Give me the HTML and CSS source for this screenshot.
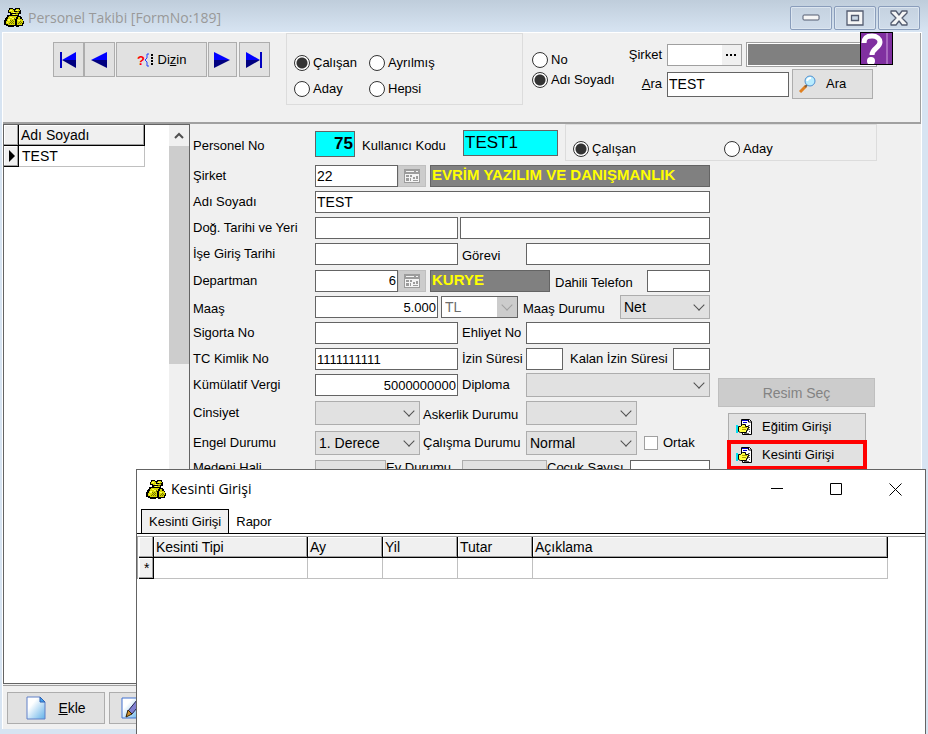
FILE: index.html
```
<!DOCTYPE html>
<html lang="tr">
<head>
	<meta charset="UTF-8">
	<title>Personel Takibi</title>
	<link rel="stylesheet" href="styles.css">
</head>
<body>
	<!-- shared icons -->
	<svg class="defs" width="0" height="0">
		<symbol id="sack" viewBox="0 0 20 19">
			<path d="M5 0h4v1h2V0h5v2h1v4h-2v2h2v1h1v2h1v2h1v3h-1v2h-4v1h-3v-1h-2v1H4v-1H2v-1H0v-5h1v-2h1V9h1V7h3V5H4V2h1z" fill="#000"/>
			<path d="M6 1h3v1H6z M12 1h3v1h-3z M5 2h5v2H5z M11 2h5v1h-5z M7 4h8v1H7z M8 6h6v1H8z M5 8h8v1H5z M4 9h8v2H4z M3 11h8v2H3z M2 13h9v3H2z M4 16h7v1H4z M14 9h2v2h-2z M13 11h5v1h-5z M13 12h6v3h-6z M13 15h5v2h-5z" fill="#d8d800"/>
			<path d="M6 2h2v1H6z M12 2h2v1h-2z M9 4h2v1H9z M6 9h2v1H6z M4 11h2v2H4z M8 10h2v1H8z M14 12h2v1h-2z M3 14h1v1H3z M9 6h2v1H9z" fill="#ffff50"/>
			<path d="M8 12h1v1H8z M6 12h1v1H6z M7 13h1v1H7z M9 13h1v1H9z M8 14h1v1H8z M6 14h1v1H6z M7 15h1v1H7z M9 15h1v1H9z M5 15h1v1H5z M10 10h1v2h-1z M16 13h1v1h-1z M17 14h1v1h-1z M15 14h1v1h-1z M16 15h1v1h-1z M14 15h1v1h-1z M12 5h2v1h-2z M13 3h2v1h-2z" fill="#707000"/>
		</symbol>
		<symbol id="lookup" viewBox="0 0 16 14">
			<path d="M0 0h16v14H0z" fill="#9c9c9c"/>
			<path d="M2 2h8v1H2z M12 2h2v1h-2z M1 5h14v8H1z" fill="#f4f4f4"/>
			<path d="M2 6h3v2H2z M6 6h2v2H6z M9 8h2v2H9z M12 7h2v3h-2z M2 9h3v3H2z M6 9h1v3H6z M9 11h5v1H9z" fill="#9c9c9c"/>
		</symbol>
		<symbol id="handDoc" viewBox="0 0 17 17">
			<path d="M5.5.5h8l2 2v13h-9v-3h-1z" fill="#fff" stroke="#000"/>
			<path d="M12.5 0v3h3" fill="none" stroke="#000"/>
			<path d="M6 1h6v1H6z M7 3h4v1H7z" fill="#0000d0"/>
			<path d="M12 6h2v1h-2z M13 8h1v1h-1z M12 10h2v1h-2z M13 12h1v1h-1z M8 14h5v1H8z" fill="#606060"/>
			<path d="M0 6h2v8H0z" fill="#00e0f0"/>
			<path d="M2.5 7.5h2l2-2h3v2h3v2h-1v2h-1v2h-6l-2-1z" fill="#ffff40" stroke="#000"/>
			<path d="M6 8.500h5M6 10.500h4" stroke="#b0a000"/>
		</symbol>
	</svg>

	<div class="window">
		<div class="titleBar">
			<svg class="appIcon"><use href="#sack"/></svg>
			<h1>Personel Takibi [FormNo:189]</h1>
			<div class="windowButtons">
				<button type="button" aria-label="Simge durumuna küçült">
					<svg width="18" height="8" viewBox="0 0 18 8"><rect x="1" y="1" width="16" height="5" rx="1" fill="#f6f6f6" stroke="#545c70"/></svg>
				</button>
				<button type="button" aria-label="Ekranı kapla">
					<svg width="18" height="16" viewBox="0 0 18 16"><path d="M1 1h16v14H1z M5.500 5.500v5h7v-5z" fill="#f6f6f6" fill-rule="evenodd" stroke="#545c70" stroke-width="1.300"/></svg>
				</button>
				<button type="button" aria-label="Kapat">
					<svg width="18" height="16" viewBox="0 0 18 16"><path d="M1 1h5l3 4 3-4h5v2l-5 5 5 5v2h-5l-3-4-3 4H1v-2l5-5-5-5z" fill="#f6f6f6" stroke="#545c70" stroke-width="1.300" stroke-linejoin="round"/></svg>
				</button>
			</div>
		</div>

		<div class="client">
			<div class="header">
				<div class="navigator">
					<button type="button" class="navFirst" aria-label="İlk">
						<svg width="17" height="16"><path d="M16 0v8H2z" fill="#00f"/><path d="M16 16V8H2z" fill="#000080"/><path d="M0 0h2v16H0z" fill="#0000c0"/></svg>
					</button>
					<button type="button" class="navPrior" aria-label="Önceki">
						<svg width="17" height="16"><path d="M16 0v8H0z" fill="#00f"/><path d="M16 16V8H0z" fill="#000080"/></svg>
					</button>
					<button type="button" class="navIndex">
						<svg width="17" height="14"><text x="0" y="12" class="questionMark">?</text><path d="M12 1h-2v4L8 7l2 2v4h2" fill="none" stroke="#2040ff"/><path d="M14 1h2v2h-2z M14 4h2v2h-2z M14 7h2v2h-2z M14 10h2v2h-2z" fill="#000"/></svg>
						<span>Di<u>z</u>in</span>
					</button>
					<button type="button" class="navNext" aria-label="Sonraki">
						<svg width="17" height="16"><path d="M0 0v8h16z" fill="#00f"/><path d="M0 16V8h16z" fill="#000080"/></svg>
					</button>
					<button type="button" class="navLast" aria-label="Son">
						<svg width="17" height="16"><path d="M0 0v8h14z" fill="#00f"/><path d="M0 16V8h14z" fill="#000080"/><path d="M14 0h2v16h-2z" fill="#0000c0"/></svg>
					</button>
				</div>

				<div class="group statusFilter">
					<label><input type="radio" name="filter" checked>Çalışan</label>
					<label><input type="radio" name="filter">Ayrılmış</label>
					<label><input type="radio" name="filter">Aday</label>
					<label><input type="radio" name="filter">Hepsi</label>
				</div>

				<div class="searchBy">
					<label><input type="radio" name="searchBy">No</label>
					<label><input type="radio" name="searchBy" checked>Adı Soyadı</label>
				</div>

				<div class="search">
					<div class="searchRow">
						<label for="txtCompanyFilter">Şirket</label>
						<div class="picker">
							<input type="text" id="txtCompanyFilter">
							<button type="button" aria-label="Şirket seç">
								<svg width="11" height="2"><path d="M0 0h2v2H0z M4 0h2v2H4z M8 0h2v2H8z"/></svg>
							</button>
						</div>
						<div class="companyName">
							<button type="button" class="help" aria-label="Yardım">
								<svg width="31" height="31" viewBox="0 0 31 31"><path d="M25 0h2v31h-2z" fill="#a868c0"/><path d="M3 10C3 3 8 3 11 3c5 0 8 3 8 6 0 6-8 6-8 13" fill="none" stroke="#fff" stroke-width="5"/><circle cx="10" cy="28" r="4" fill="#fff"/></svg>
							</button>
						</div>
					</div>
					<div class="searchRow">
						<label for="txtSearch"><u>A</u>ra</label>
						<input type="text" id="txtSearch" class="field" value="TEST">
						<button type="button" class="btnSearch">
							<svg width="18" height="18"><path d="M1 17l6-6" stroke="#e08020" stroke-width="3"/><path d="M6 12l2-2" stroke="#806040" stroke-width="2"/><circle cx="11" cy="6" r="5" fill="#b8ecff" stroke="#5090d0"/><path d="M8 6q1-3 4-3" fill="none" stroke="#fff" stroke-width="2"/></svg>
							<span>Ara</span>
						</button>
					</div>
				</div>
			</div>

			<div class="content">
				<div class="personList">
					<table class="grid">
						<thead>
							<tr><th class="marker"></th><th class="colName">Adı Soyadı</th></tr>
						</thead>
						<tbody>
							<tr><th class="marker"><svg width="6" height="12"><path d="M0 0l6 6-6 6z"/></svg></th><td>TEST</td></tr>
						</tbody>
					</table>
					<div class="scrollBar">
						<button type="button" aria-label="Yukarı"><svg width="10" height="7"><path d="M1 6l4-4 4 4" fill="none" stroke="#505050" stroke-width="2"/></svg></button>
						<div class="thumb"></div>
					</div>
				</div>

				<div class="form">
					<div class="row firstRow">
						<label class="caption" for="txtNo">Personel No</label>
						<input type="text" id="txtNo" class="field key keyNo" value="75">
						<label class="userCaption" for="txtUser">Kullanıcı Kodu</label>
						<input type="text" id="txtUser" class="field key keyUser" value="TEST1">
						<div class="group statusGroup">
							<label><input type="radio" name="status" checked>Çalışan</label>
							<label><input type="radio" name="status">Aday</label>
						</div>
					</div>
					<div class="formBody">
						<div class="fields">
							<div class="row lookupRow">
								<label class="caption" for="txtCompany">Şirket</label>
								<input type="text" id="txtCompany" class="field code" value="22">
								<button type="button" class="lookup" aria-label="Şirket listesi" disabled><svg><use href="#lookup"/></svg></button>
								<output class="display grow">EVRİM YAZILIM VE DANIŞMANLIK</output>
							</div>
							<div class="row">
								<label class="caption" for="txtName">Adı Soyadı</label>
								<input type="text" id="txtName" class="field grow" value="TEST">
							</div>
							<div class="row">
								<label class="caption" for="txtBirth">Doğ. Tarihi ve Yeri</label>
								<input type="text" id="txtBirth" class="field medium">
								<input type="text" class="field grow birthPlace" aria-label="Doğum yeri">
							</div>
							<div class="row">
								<label class="caption" for="txtStart">İşe Giriş Tarihi</label>
								<input type="text" id="txtStart" class="field medium">
								<label class="second low" for="txtJob">Görevi</label>
								<input type="text" id="txtJob" class="field grow">
							</div>
							<div class="row lookupRow">
								<label class="caption" for="txtDepartment">Departman</label>
								<input type="text" id="txtDepartment" class="field code number" value="6">
								<button type="button" class="lookup" aria-label="Departman listesi" disabled><svg><use href="#lookup"/></svg></button>
								<output class="display department">KURYE</output>
								<label class="phoneCaption low" for="txtPhone">Dahili Telefon</label>
								<input type="text" id="txtPhone" class="field grow">
							</div>
							<div class="row">
								<label class="caption low" for="txtSalary">Maaş</label>
								<input type="text" id="txtSalary" class="field salary number" value="5.000">
								<div class="combo currency">
									<select aria-label="Para birimi" disabled><option>TL</option></select>
								</div>
								<label class="salaryCaption low" for="selSalaryType">Maaş Durumu</label>
								<div class="combo grow"><select id="selSalaryType"><option>Net</option><option>Brüt</option></select></div>
							</div>
							<div class="row">
								<label class="caption" for="txtInsurance">Sigorta No</label>
								<input type="text" id="txtInsurance" class="field medium">
								<label class="second" for="txtLicence">Ehliyet No</label>
								<input type="text" id="txtLicence" class="field grow">
							</div>
							<div class="row">
								<label class="caption" for="txtIdentity">TC Kimlik No</label>
								<input type="text" id="txtIdentity" class="field medium digits" value="1111111111">
								<label class="second" for="txtLeave">İzin Süresi</label>
								<input type="text" id="txtLeave" class="field leave">
								<label class="leaveCaption" for="txtLeaveLeft">Kalan İzin Süresi</label>
								<input type="text" id="txtLeaveLeft" class="field grow">
							</div>
							<div class="row">
								<label class="caption" for="txtTax">Kümülatif Vergi</label>
								<input type="text" id="txtTax" class="field medium number" value="5000000000">
								<label class="second" for="selDiploma">Diploma</label>
								<div class="combo grow"><select id="selDiploma"><option></option></select></div>
							</div>
							<div class="row comboRow">
								<label class="caption" for="selGender">Cinsiyet</label>
								<div class="combo left"><select id="selGender"><option></option></select></div>
								<label class="wide low" for="selMilitary">Askerlik Durumu</label>
								<div class="combo right"><select id="selMilitary"><option></option></select></div>
							</div>
							<div class="row comboRow">
								<label class="caption" for="selDisability">Engel Durumu</label>
								<div class="combo left"><select id="selDisability"><option>1. Derece</option></select></div>
								<label class="wide" for="selWork">Çalışma Durumu</label>
								<div class="combo right"><select id="selWork"><option>Normal</option></select></div>
								<label class="partner"><input type="checkbox">Ortak</label>
							</div>
							<div class="row comboRow lastRow">
								<label class="caption" for="selMarital">Medeni Hali</label>
								<div class="combo marital"><select id="selMarital"><option></option></select></div>
								<label class="house" for="selHouse">Ev Durumu</label>
								<div class="combo houseCombo"><select id="selHouse"><option></option></select></div>
								<label class="children" for="txtChildren">Çocuk Sayısı</label>
								<input type="text" id="txtChildren" class="field grow">
							</div>
						</div>
						<div class="side">
							<button type="button" class="btnPicture" disabled>Resim Seç</button>
							<button type="button" class="btnEntry"><svg><use href="#handDoc"/></svg>Eğitim Girişi</button>
							<button type="button" class="btnEntry marked"><svg><use href="#handDoc"/></svg>Kesinti Girişi</button>
						</div>
					</div>
				</div>
			</div>

			<div class="footer">
				<button type="button" class="btnAdd">
					<svg width="20" height="24"><defs><linearGradient id="paper" x1="0" y1="0" x2="1" y2="1"><stop offset="0.300" stop-color="#fff"/><stop offset="1" stop-color="#60b0e8"/></linearGradient></defs><path d="M1 1h13l5 5v17H1z" fill="url(#paper)" stroke="#6080c8"/><path d="M14 1v5h5z" fill="#40a0f0" stroke="#3060b0"/></svg>
					<span><u>E</u>kle</span>
				</button>
				<button type="button" class="btnEdit" aria-label="Düzelt">
					<svg width="24" height="24"><path d="M1 2h18v20H1z" fill="url(#paper)" stroke="#4070d0"/><path d="M7 15L16 4l4 3-9 11z" fill="#8080d0" stroke="#202050"/><path d="M7 14l4 4-6 3z" fill="#d09030" stroke="#302000"/></svg>
				</button>
			</div>
		</div>
	</div>

	<div class="dialog">
		<div class="dialogTitle">
			<svg class="appIcon"><use href="#sack"/></svg>
			<h2>Kesinti Girişi</h2>
			<div class="dialogButtons">
				<button type="button" aria-label="Simge durumuna küçült"><svg width="13" height="13"><path d="M0 5.500h12" stroke="#000"/></svg></button>
				<button type="button" aria-label="Ekranı kapla"><svg width="13" height="13"><path d="M.5.5h11v11H.5z" fill="none" stroke="#000"/></svg></button>
				<button type="button" aria-label="Kapat"><svg width="13" height="13"><path d="M.5.5l12 12M12.500.5l-12 12" stroke="#000"/></svg></button>
			</div>
		</div>
		<div class="tabs">
			<button type="button" class="tab active">Kesinti Girişi</button>
			<button type="button" class="tab">Rapor</button>
		</div>
		<div class="tabPage">
			<table class="grid">
				<thead>
					<tr><th class="marker"></th><th class="colType">Kesinti Tipi</th><th class="colSmall">Ay</th><th class="colSmall">Yil</th><th class="colSmall">Tutar</th><th class="colNote">Açıklama</th></tr>
				</thead>
				<tbody>
					<tr><th class="marker">*</th><td></td><td></td><td></td><td></td><td></td></tr>
				</tbody>
			</table>
		</div>
	</div>
</body>
</html>
```
FILE: styles.css
```
* {
	box-sizing: border-box;
}
body {
	margin: 0px;
	height: 100vh;
	overflow: hidden;
	position: relative;
	background-color: #d7e4f2;
	color: #000;
	font-family: "Liberation Sans", Arial, sans-serif;
	font-size: 13px;
	line-height: 16px;
}
button, input, select {
	font: inherit;
	color: inherit;
	margin: 0px;
	border-radius: 0px;
}
button {
	display: flex;
	align-items: center;
	justify-content: center;
	padding: 0px;
	background-color: #e1e1e1;
	border: 1px solid #adadad;
}
label {
	white-space: nowrap;
}
h1, h2 {
	margin: 0px;
	font-family: "Open Sans", "Noto Sans", sans-serif;
	font-size: 14px;
	font-weight: normal;
	line-height: 20px;
}
.defs {
	position: absolute;
}
.appIcon {
	width: 20px;
	height: 19px;
}

/* main window */
.window {
	height: 100%;
	display: flex;
	flex-direction: column;
	padding: 0px 6px 5px 2px;
}
.titleBar {
	display: flex;
	align-items: center;
	height: 32px;
	margin: 0px -6px 0px -2px;
	padding: 3px 8px 0px 4px;
	gap: 4px;
	background: linear-gradient(#bfcddb, #d7e4f2);
}
.titleBar h1 {
	flex: 1;
	color: #999;
}
.windowButtons {
	display: flex;
	gap: 2px;
}
.windowButtons button {
	width: 42px;
	height: 24px;
	background: linear-gradient(#c5d2e0, #d0dcea);
	border: 1px solid #8a9dbb;
	border-radius: 2px;
	box-shadow: inset 0 0 0 1px #dce6f0;
}
.client {
	flex: 1;
	min-height: 0;
	display: flex;
	flex-direction: column;
	background-color: #f0f0f0;
	border-top: 1px solid #fff;
	border-left: 1px solid #fff;
	border-right: 1px solid #fff;
}

/* top panel */
.header {
	display: flex;
	align-items: flex-start;
	height: 91px;
	padding-left: 50px;
	border-bottom: 2px solid #a0a0a0;
	border-right: 1px solid #a0a0a0;
}
.navigator {
	display: flex;
	margin-top: 9px;
}
.navigator button {
	width: 31px;
	height: 35px;
}
.navigator .navIndex {
	width: 91px;
	gap: 4px;
	margin: 0px 1px;
}
.navigator .navNext {
	width: 29px;
	margin-right: 2px;
}
.questionMark {
	fill: #f00;
	font-size: 13px;
	font-weight: bold;
}
.group {
	border: 1px solid #dcdcdc;
}
.statusFilter {
	display: grid;
	grid-template-columns: 75px auto;
	align-content: start;
	gap: 10px 0px;
	width: 237px;
	height: 72px;
	margin-left: 16px;
	padding: 21px 0px 0px 7px;
}
.group label, .searchBy label {
	display: flex;
	align-items: center;
	gap: 3px;
}
input[type="radio"] {
	appearance: none;
	width: 16px;
	height: 16px;
	border: 1px solid #333;
	border-radius: 50%;
	background-color: #fff;
}
input[type="radio"]:checked {
	background: radial-gradient(circle, #333 5px, #fff 6px);
}
.searchBy {
	display: flex;
	flex-direction: column;
	gap: 4px;
	width: 89px;
	margin: 19px 0px 0px 9px;
}
.search {
	display: flex;
	flex-direction: column;
	gap: 2px;
	margin-top: 9px;
}
.searchRow {
	display: flex;
	align-items: center;
}
.searchRow label {
	width: 41px;
	margin-right: 5px;
	text-align: right;
}
.picker {
	display: flex;
	width: 75px;
	height: 22px;
	background-color: #fff;
	border: 1px solid #a0a0a0;
}
.picker input {
	flex: 1;
	min-width: 0;
	border: none;
}
.picker button {
	width: 19px;
	background-color: #f0f0f0;
	border: none;
}
.companyName {
	position: relative;
	width: 131px;
	height: 25px;
	margin-left: 4px;
	background-color: #808080;
	border: 1px solid #a0a0a0;
	outline: 1px solid #fff;
	outline-offset: -2px;
}
.help {
	position: absolute;
	top: -11px;
	right: -17px;
	width: 33px;
	height: 33px;
	background-color: #8030a0;
	border: 1px solid #000;
}
#txtSearch {
	width: 122px;
	height: 25px;
}
.btnSearch {
	width: 81px;
	height: 30px;
	margin-left: 3px;
	gap: 9px;
	justify-content: flex-start;
	padding-left: 6px;
}

/* person list */
.content {
	flex: 1;
	min-height: 0;
	display: flex;
	overflow: hidden;
}
.personList {
	display: flex;
	justify-content: space-between;
	align-items: flex-start;
	width: 187px;
	background-color: #fff;
	border: 1px solid #646464;
}
.grid {
	border-collapse: separate;
	border-spacing: 0px;
	table-layout: fixed;
	font-size: 14px;
}
.grid th {
	height: 21px;
	padding: 0px 0px 0px 2px;
	font-weight: normal;
	text-align: left;
	background-color: #f0f0f0;
	border-right: 1px solid #000;
	border-bottom: 1px solid #000;
	box-shadow: inset -1px -1px #a0a0a0, inset 1px 1px #fff;
}
.grid td {
	height: 21px;
	padding: 0px 3px;
	border-right: 1px solid #c0c0c0;
	border-bottom: 1px solid #c0c0c0;
}
.grid .marker {
	width: 15px;
	padding-left: 5px;
}
.grid .marker svg {
	display: block;
}
.colName {
	width: 126px;
}
.scrollBar {
	width: 20px;
	height: 100%;
	background-color: #f0f0f0;
}
.scrollBar button {
	width: 20px;
	height: 21px;
	background-color: #f0f0f0;
	border: none;
}
.thumb {
	height: 39%;
	background-color: #cdcdcd;
}

/* form */
.form {
	flex: 1;
	min-width: 0;
	padding-left: 3px;
}
.row {
	display: flex;
	align-items: center;
	height: 22px;
}
.lookupRow {
	height: 23px;
}
.comboRow {
	height: 26px;
}
.lastRow {
	align-items: flex-start;
}
.firstRow {
	height: 40px;
	align-items: flex-start;
}
.firstRow label.caption, .userCaption {
	margin-top: 14px;
}
.formBody {
	display: flex;
}
.fields {
	flex: 1;
	min-width: 0;
	display: flex;
	flex-direction: column;
	gap: 4px;
}
.caption {
	width: 122px;
}
.field {
	height: 22px;
	padding: 0px 1px;
	background-color: #fff;
	border: 1px solid #646464;
	font-size: 14px;
}
.grow {
	flex: 1;
	min-width: 0;
}
.number, .digits {
	font-size: 13px;
}
.number {
	text-align: right;
}
.code {
	width: 83px;
}
.medium {
	width: 143px;
}
.salary {
	width: 123px;
}
.leave {
	width: 37px;
}
.key {
	background-color: #0ff;
	font-size: 17px;
}
.keyNo {
	width: 40px;
	height: 26px;
	margin-top: 7px;
	font-weight: bold;
	text-align: right;
}
.keyUser {
	width: 95px;
	height: 26px;
	margin-top: 6px;
}
.userCaption {
	width: 101px;
	margin-left: 7px;
}
.statusGroup {
	display: flex;
	align-items: flex-end;
	width: 312px;
	height: 37px;
	margin-left: 7px;
	padding: 0px 0px 3px 7px;
}
.statusGroup label {
	width: 151px;
}
.birthPlace {
	margin-left: 2px;
}
.low {
	padding-top: 4px;
}
.second {
	width: 64px;
	margin-left: 4px;
}
.lookup {
	width: 28px;
	height: 22px;
	background-color: #ccc;
	border: 1px solid #bfbfbf;
}
.lookup svg {
	width: 16px;
	height: 14px;
}
.display {
	height: 22px;
	margin-left: 4px;
	padding: 1px;
	background-color: #808080;
	border: 1px solid #646464;
	color: #ff0;
	font-size: 15px;
	font-weight: bold;
	overflow: hidden;
	white-space: nowrap;
}
.department {
	width: 120px;
}
.phoneCaption {
	width: 92px;
	margin-left: 5px;
}
.salaryCaption {
	width: 97px;
	margin-left: 5px;
}
.leaveCaption {
	width: 103px;
	margin-left: 7px;
}
.wide {
	width: 103px;
	margin-left: 3px;
}
.partner {
	display: flex;
	align-items: center;
	gap: 5px;
	margin-left: 7px;
}
.partner input {
	appearance: none;
	width: 14px;
	height: 14px;
	background-color: #fff;
	border: 1px solid #a0a0a0;
}
.house {
	width: 76px;
}
.children {
	width: 83px;
}

/* drop-downs, arrow shares the cell with the select */
.combo {
	display: grid;
	align-items: center;
	height: 24px;
}
.combo select {
	grid-area: 1 / 1;
	width: 100%;
	height: 24px;
	padding: 0px 3px;
	appearance: none;
	background-color: #e1e1e1;
	border: 1px solid #adadad;
	font-size: 14px;
}
.combo::after {
	content: "";
	grid-area: 1 / 1;
	justify-self: end;
	width: 7px;
	height: 7px;
	margin: 0px 7px 4px 0px;
	border-right: 1px solid #505050;
	border-bottom: 1px solid #505050;
	transform: rotate(45deg);
	pointer-events: none;
}
.currency {
	width: 77px;
	height: 22px;
	margin-left: 3px;
}
.currency select {
	height: 22px;
	opacity: 1;
	color: #6d6d6d;
	background: linear-gradient(to left, #ccc 20px, #fff 20px);
	border-color: #646464;
}
.currency::after {
	border-color: #a0a0a0;
}
.left {
	width: 105px;
}
.right {
	width: 111px;
}
.marital {
	width: 71px;
}
.houseCombo {
	width: 85px;
}

/* buttons beside the form */
.side {
	width: 211px;
	padding: 214px 0px 0px 8px;
}
.btnPicture {
	width: 157px;
	height: 29px;
	background-color: #ccc;
	border-color: #bfbfbf;
	color: #838383;
	font-size: 14px;
}
.btnEntry {
	justify-content: flex-start;
	width: 138px;
	height: 28px;
	margin: 6px 0px 0px 10px;
	padding-left: 7px;
	gap: 9px;
}
.btnEntry svg {
	width: 17px;
	height: 17px;
}
.btnEntry.marked {
	margin-top: 0px;
	outline: 4px solid #f00;
	outline-offset: -3px;
}

/* bottom panel */
.footer {
	display: flex;
	gap: 4px;
	height: 44px;
	margin-top: 1px;
	padding: 6px 4px;
	border-top: 1px solid #a0a0a0;
}
.footer button {
	width: 98px;
	height: 32px;
	gap: 12px;
	font-size: 14px;
}
.footer .btnEdit {
	justify-content: flex-start;
	padding-left: 11px;
}

/* deduction dialog */
.dialog {
	position: absolute;
	left: 136px;
	right: 2px;
	top: 469px;
	bottom: 0px;
	background-color: #fff;
	border: 1px solid #646464;
	border-bottom: none;
}
.dialogTitle {
	display: flex;
	align-items: center;
	height: 38px;
	padding-left: 9px;
	gap: 5px;
}
.dialogTitle h2 {
	flex: 1;
}
.dialogButtons {
	display: flex;
}
.dialogButtons button {
	width: 59px;
	height: 30px;
	background-color: #fff;
	border: none;
}
.tabs {
	display: flex;
	align-items: flex-end;
	height: 26px;
	padding-left: 4px;
	border-bottom: 1px solid #000;
}
.tab {
	height: 23px;
	padding: 0px 7px;
	background-color: #fff;
	border: none;
}
.tab.active {
	height: 24px;
	background-color: #f0f0f0;
	border: 1px solid #000;
	border-bottom: none;
}
.tabPage {
	margin-top: 2px;
	padding-left: 1px;
	border-top: 1px solid #a0a0a0;
	border-left: 1px solid #a0a0a0;
}
.colType {
	width: 154px;
}
.colSmall {
	width: 75px;
}
.colNote {
	width: 355px;
}
```
